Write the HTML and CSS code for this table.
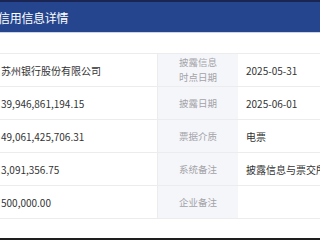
FILE: index.html
```html
<!DOCTYPE html>
<html lang="zh">
<head>
<meta charset="utf-8">
<link rel="stylesheet" href="styles.css">
</head>
<body>
<div class="page">
  <header class="header"><span class="title">信用信息详情</span></header>
  <div class="gap"></div>
  <div class="table">
    <div class="cell val">苏州银行股份有限公司</div>
    <div class="cell lbl">披露信息<br>时点日期</div>
    <div class="cell val2">2025-05-31</div>

    <div class="cell val">39,946,861,194.15</div>
    <div class="cell lbl">披露日期</div>
    <div class="cell val2">2025-06-01</div>

    <div class="cell val">49,061,425,706.31</div>
    <div class="cell lbl">票据介质</div>
    <div class="cell val2">电票</div>

    <div class="cell val">3,091,356.75</div>
    <div class="cell lbl">系统备注</div>
    <div class="cell val2">披露信息与票交所一致</div>

    <div class="cell val">500,000.00</div>
    <div class="cell lbl">企业备注</div>
    <div class="cell val2"></div>
  </div>
  <div class="after"></div>
  <div class="bottom"></div>
</div>
</body>
</html>
```
FILE: styles.css
```css
html, body {
  margin: 0;
  padding: 0;
  background: #ffffff;
  width: 320px;
  height: 240px;
  overflow: hidden;
}
.page {
  width: 320px;
  height: 240px;
  display: flex;
  flex-direction: column;
  font-family: "Noto Sans CJK SC", "Noto Sans", sans-serif;
}
.header {
  height: 30px;
  border-top: 2px solid #1b2553;
  border-bottom: 1px solid #c9d4ec;
  background: #25468f;
  display: flex;
  align-items: center;
  padding-left: 0;
}
.title {
  color: #ffffff;
  font-size: 12px;
  margin-left: -2px;
  letter-spacing: -0.3px;
}
.gap {
  height: 20px;
}
.table {
  display: grid;
  grid-template-columns: 158px 80px 1fr;
  grid-auto-rows: 33px;
  border-top: 1px solid #ececec;
}
.cell {
  border-bottom: 1px solid #ececec;
  display: flex;
  align-items: center;
  font-size: 10px;
  color: #333333;
  white-space: nowrap;
  overflow: hidden;
}
.val {
  padding-left: 1px;
  border-right: 1px solid #ececec;
}
.lbl {
  background: #f5f6fa;
  color: #a3a3a8;
  justify-content: center;
  text-align: center;
  font-size: 9.5px;
  line-height: 15px;
}
.val2 {
  padding-left: 8px;
}
.after {
  flex: 1;
}
.bottom {
  height: 2px;
  background: #1e1e1e;
}
```
